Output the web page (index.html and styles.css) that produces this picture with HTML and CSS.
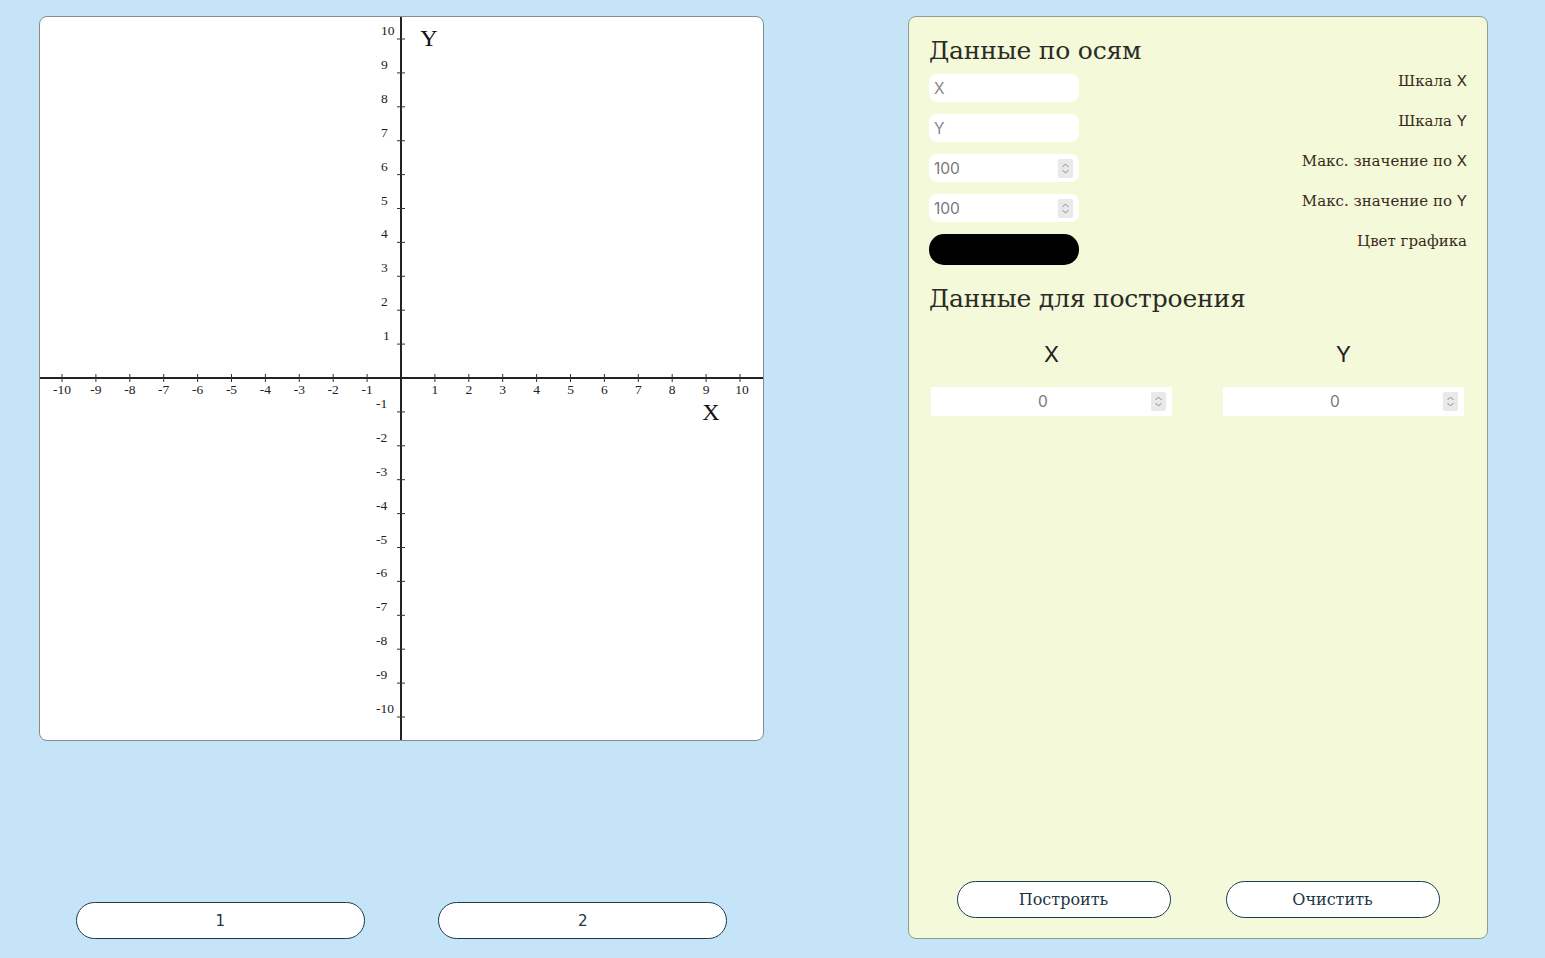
FILE: index.html
```html
<!DOCTYPE html>
<html lang="ru">
<head>
<meta charset="utf-8">
<title>График</title>
<link rel="stylesheet" href="styles.css">
</head>
<body>
<div class="page">
  <div class="left">
    <div class="graph">
      <svg class="plane" width="723" height="723" viewBox="-361 -361 723 723">
        <g class="axes">
          <line x1="-361" y1="0" x2="362" y2="0"/>
          <line x1="0" y1="-361" x2="0" y2="362"/>
        </g>
        <g class="ticks">
          <line x1="-339" y1="-4" x2="-339" y2="4"/>
          <line x1="-305.1" y1="-4" x2="-305.1" y2="4"/>
          <line x1="-271.2" y1="-4" x2="-271.2" y2="4"/>
          <line x1="-237.3" y1="-4" x2="-237.3" y2="4"/>
          <line x1="-203.4" y1="-4" x2="-203.4" y2="4"/>
          <line x1="-169.5" y1="-4" x2="-169.5" y2="4"/>
          <line x1="-135.6" y1="-4" x2="-135.6" y2="4"/>
          <line x1="-101.7" y1="-4" x2="-101.7" y2="4"/>
          <line x1="-67.8" y1="-4" x2="-67.8" y2="4"/>
          <line x1="-33.9" y1="-4" x2="-33.9" y2="4"/>
          <line x1="33.9" y1="-4" x2="33.9" y2="4"/>
          <line x1="67.8" y1="-4" x2="67.8" y2="4"/>
          <line x1="101.7" y1="-4" x2="101.7" y2="4"/>
          <line x1="135.6" y1="-4" x2="135.6" y2="4"/>
          <line x1="169.5" y1="-4" x2="169.5" y2="4"/>
          <line x1="203.4" y1="-4" x2="203.4" y2="4"/>
          <line x1="237.3" y1="-4" x2="237.3" y2="4"/>
          <line x1="271.2" y1="-4" x2="271.2" y2="4"/>
          <line x1="305.1" y1="-4" x2="305.1" y2="4"/>
          <line x1="339" y1="-4" x2="339" y2="4"/>
          <line y1="-339" x1="-4" y2="-339" x2="4"/>
          <line y1="-305.1" x1="-4" y2="-305.1" x2="4"/>
          <line y1="-271.2" x1="-4" y2="-271.2" x2="4"/>
          <line y1="-237.3" x1="-4" y2="-237.3" x2="4"/>
          <line y1="-203.4" x1="-4" y2="-203.4" x2="4"/>
          <line y1="-169.5" x1="-4" y2="-169.5" x2="4"/>
          <line y1="-135.6" x1="-4" y2="-135.6" x2="4"/>
          <line y1="-101.7" x1="-4" y2="-101.7" x2="4"/>
          <line y1="-67.8" x1="-4" y2="-67.8" x2="4"/>
          <line y1="-33.9" x1="-4" y2="-33.9" x2="4"/>
          <line y1="33.9" x1="-4" y2="33.9" x2="4"/>
          <line y1="67.8" x1="-4" y2="67.8" x2="4"/>
          <line y1="101.7" x1="-4" y2="101.7" x2="4"/>
          <line y1="135.6" x1="-4" y2="135.6" x2="4"/>
          <line y1="169.5" x1="-4" y2="169.5" x2="4"/>
          <line y1="203.4" x1="-4" y2="203.4" x2="4"/>
          <line y1="237.3" x1="-4" y2="237.3" x2="4"/>
          <line y1="271.2" x1="-4" y2="271.2" x2="4"/>
          <line y1="305.1" x1="-4" y2="305.1" x2="4"/>
          <line y1="339" x1="-4" y2="339" x2="4"/>
        </g>
        <g class="xnums">
          <text x="-339" y="16">-10</text>
          <text x="-305.1" y="16">-9</text>
          <text x="-271.2" y="16">-8</text>
          <text x="-237.3" y="16">-7</text>
          <text x="-203.4" y="16">-6</text>
          <text x="-169.5" y="16">-5</text>
          <text x="-135.6" y="16">-4</text>
          <text x="-101.7" y="16">-3</text>
          <text x="-67.8" y="16">-2</text>
          <text x="-33.9" y="16">-1</text>
          <text x="33.9" y="16">1</text>
          <text x="67.8" y="16">2</text>
          <text x="101.7" y="16">3</text>
          <text x="135.6" y="16">4</text>
          <text x="169.5" y="16">5</text>
          <text x="203.4" y="16">6</text>
          <text x="237.3" y="16">7</text>
          <text x="271.2" y="16">8</text>
          <text x="305.1" y="16">9</text>
          <text x="341" y="16">10</text>
        </g>
        <g class="ynums">
          <text x="-20" y="-343">10</text>
          <text x="-20" y="-309.1">9</text>
          <text x="-20" y="-275.2">8</text>
          <text x="-20" y="-241.3">7</text>
          <text x="-20" y="-207.4">6</text>
          <text x="-20" y="-173.5">5</text>
          <text x="-20" y="-139.6">4</text>
          <text x="-20" y="-105.7">3</text>
          <text x="-20" y="-71.8">2</text>
          <text x="-18" y="-37.9">1</text>
          <text x="-25" y="29.9">-1</text>
          <text x="-25" y="63.8">-2</text>
          <text x="-25" y="97.7">-3</text>
          <text x="-25" y="131.6">-4</text>
          <text x="-25" y="165.5">-5</text>
          <text x="-25" y="199.4">-6</text>
          <text x="-25" y="233.3">-7</text>
          <text x="-25" y="267.2">-8</text>
          <text x="-25" y="301.1">-9</text>
          <text x="-25" y="335">-10</text>
        </g>
        <text class="axis-name" x="28" y="-332">Y</text>
        <text class="axis-name" x="310" y="42">X</text>
      </svg>
    </div>
    <div class="pages">
      <button class="pill pill-num">1</button>
      <button class="pill pill-num">2</button>
    </div>
  </div>

  <div class="panel">
    <h2 class="title">Данные по осям</h2>
    <div class="settings">
      <div class="row">
        <input class="field" type="text" placeholder="X">
        <span class="label">Шкала <span class="latin">X</span></span>
      </div>
      <div class="row">
        <input class="field" type="text" placeholder="Y">
        <span class="label">Шкала <span class="latin">Y</span></span>
      </div>
      <div class="row">
        <div class="field numfield">
          <input class="numinput" type="text" value="100">
          <span class="spin"><svg width="9" height="13" viewBox="0 0 9 13"><path d="M1.5 5 L4.5 2 L7.5 5 M1.5 8 L4.5 11 L7.5 8"/></svg></span>
        </div>
        <span class="label">Макс. значение по <span class="latin">X</span></span>
      </div>
      <div class="row">
        <div class="field numfield">
          <input class="numinput" type="text" value="100">
          <span class="spin"><svg width="9" height="13" viewBox="0 0 9 13"><path d="M1.5 5 L4.5 2 L7.5 5 M1.5 8 L4.5 11 L7.5 8"/></svg></span>
        </div>
        <span class="label">Макс. значение по <span class="latin">Y</span></span>
      </div>
      <div class="row">
        <div class="swatch"></div>
        <span class="label">Цвет графика</span>
      </div>
    </div>

    <h2 class="title title-second">Данные для построения</h2>
    <div class="data">
      <div class="col">
        <div class="col-head">X</div>
        <div class="cell">
          <input class="cellinput" type="text" value="0">
          <span class="spin"><svg width="9" height="13" viewBox="0 0 9 13"><path d="M1.5 5 L4.5 2 L7.5 5 M1.5 8 L4.5 11 L7.5 8"/></svg></span>
        </div>
      </div>
      <div class="col">
        <div class="col-head">Y</div>
        <div class="cell">
          <input class="cellinput" type="text" value="0">
          <span class="spin"><svg width="9" height="13" viewBox="0 0 9 13"><path d="M1.5 5 L4.5 2 L7.5 5 M1.5 8 L4.5 11 L7.5 8"/></svg></span>
        </div>
      </div>
    </div>

    <div class="actions">
      <button class="pill pill-word">Построить</button>
      <button class="pill pill-word">Очистить</button>
    </div>
  </div>
</div>
</body>
</html>
```

FILE: styles.css
```css
* { box-sizing: border-box; }

html, body {
  margin: 0;
  padding: 0;
  background: #c6e4f7;
  height: 100%;
}

body {
  font-family: "DejaVu Serif", serif;
  color: #2a2a22;
}

.page {
  display: flex;
  align-items: flex-start;
  gap: 144px;
  padding: 16px 0 0 39px;
}

.left {
  width: 725px;
  height: 923px;
  display: flex;
  flex-direction: column;
  justify-content: space-between;
}

.graph {
  width: 725px;
  height: 725px;
  background: #ffffff;
  border: 1px solid #8a8a8a;
  border-radius: 8px;
  overflow: hidden;
}

.plane {
  display: block;
}

.axes line {
  stroke: #222;
  stroke-width: 2;
}

.ticks line {
  stroke: #333;
  stroke-width: 1;
}

.xnums text {
  font-family: "Liberation Serif", serif;
  font-size: 13.5px;
  fill: #222;
  text-anchor: middle;
}

.ynums text {
  font-family: "Liberation Serif", serif;
  font-size: 13.5px;
  fill: #222;
}

.axis-name {
  font-family: "Liberation Serif", serif;
  font-size: 24px;
  fill: #111;
  text-anchor: middle;
}

.pages {
  display: flex;
  justify-content: space-around;
}

.pill {
  background: #ffffff;
  border: 1px solid #1c3a4e;
  border-radius: 19px;
  color: #1d3445;
  cursor: pointer;
  padding: 0;
}

.pill-num {
  width: 289px;
  height: 37px;
  font-family: "DejaVu Sans", sans-serif;
  font-size: 15px;
}

.panel {
  width: 580px;
  height: 923px;
  background: #f4f9d9;
  border: 1px solid #8f9d8f;
  border-radius: 8px;
  padding: 20px;
  display: flex;
  flex-direction: column;
}

.title {
  margin: 0;
  font-weight: normal;
  font-size: 25px;
  line-height: 28px;
  color: #2b2b25;
  letter-spacing: -0.2px;
}

.settings {
  margin-top: 9px;
  display: flex;
  flex-direction: column;
  gap: 12px;
}

.row {
  display: flex;
  justify-content: space-between;
  align-items: flex-start;
}

.field {
  width: 150px;
  height: 28px;
  background: #ffffff;
  border: none;
  border-radius: 8px;
  padding: 0 5px;
  font-family: "Inter", "Open Sans", sans-serif;
  font-size: 15.5px;
  color: #777;
  outline: none;
}

.field::placeholder {
  color: #888;
}

.numfield {
  display: flex;
  align-items: center;
  padding: 0 6px 0 5px;
}

.numinput {
  flex: 1;
  min-width: 0;
  border: none;
  background: transparent;
  font-family: "Inter", "Open Sans", sans-serif;
  font-size: 15.5px;
  color: #777;
  outline: none;
  padding: 0;
}

.spin {
  width: 15px;
  height: 19px;
  background: #e9e9e9;
  border-radius: 2px;
  display: flex;
  align-items: center;
  justify-content: center;
}

.spin path {
  fill: none;
  stroke: #8a8a8a;
  stroke-width: 1;
}

.swatch {
  width: 150px;
  height: 31px;
  background: #000;
  border-radius: 15px;
}

.label {
  font-size: 15px;
  line-height: 14px;
  color: #3a2a1c;
}

.latin {
  font-family: "Inter", "Open Sans", sans-serif;
  font-size: 15px;
}

.title-second {
  margin-top: 20px;
}

.data {
  margin-top: 28px;
  padding-left: 2px;
  display: flex;
  gap: 51px;
}

.col {
  width: 241px;
  display: flex;
  flex-direction: column;
  align-items: center;
}

.col-head {
  font-family: "Inter", "Open Sans", sans-serif;
  font-size: 22px;
  line-height: 26px;
  color: #222;
  margin-bottom: 20px;
}

.cell {
  width: 241px;
  height: 29px;
  background: #ffffff;
  display: flex;
  align-items: center;
  padding: 0 6px 0 4px;
}

.cellinput {
  flex: 1;
  min-width: 0;
  border: none;
  background: transparent;
  text-align: center;
  font-family: "Inter", "Open Sans", sans-serif;
  font-size: 15.5px;
  color: #777;
  outline: none;
  padding: 0;
}

.actions {
  margin-top: auto;
  display: flex;
  justify-content: space-around;
}

.pill-word {
  width: 214px;
  height: 37px;
  font-family: "DejaVu Serif", serif;
  font-size: 16px;
}
```
